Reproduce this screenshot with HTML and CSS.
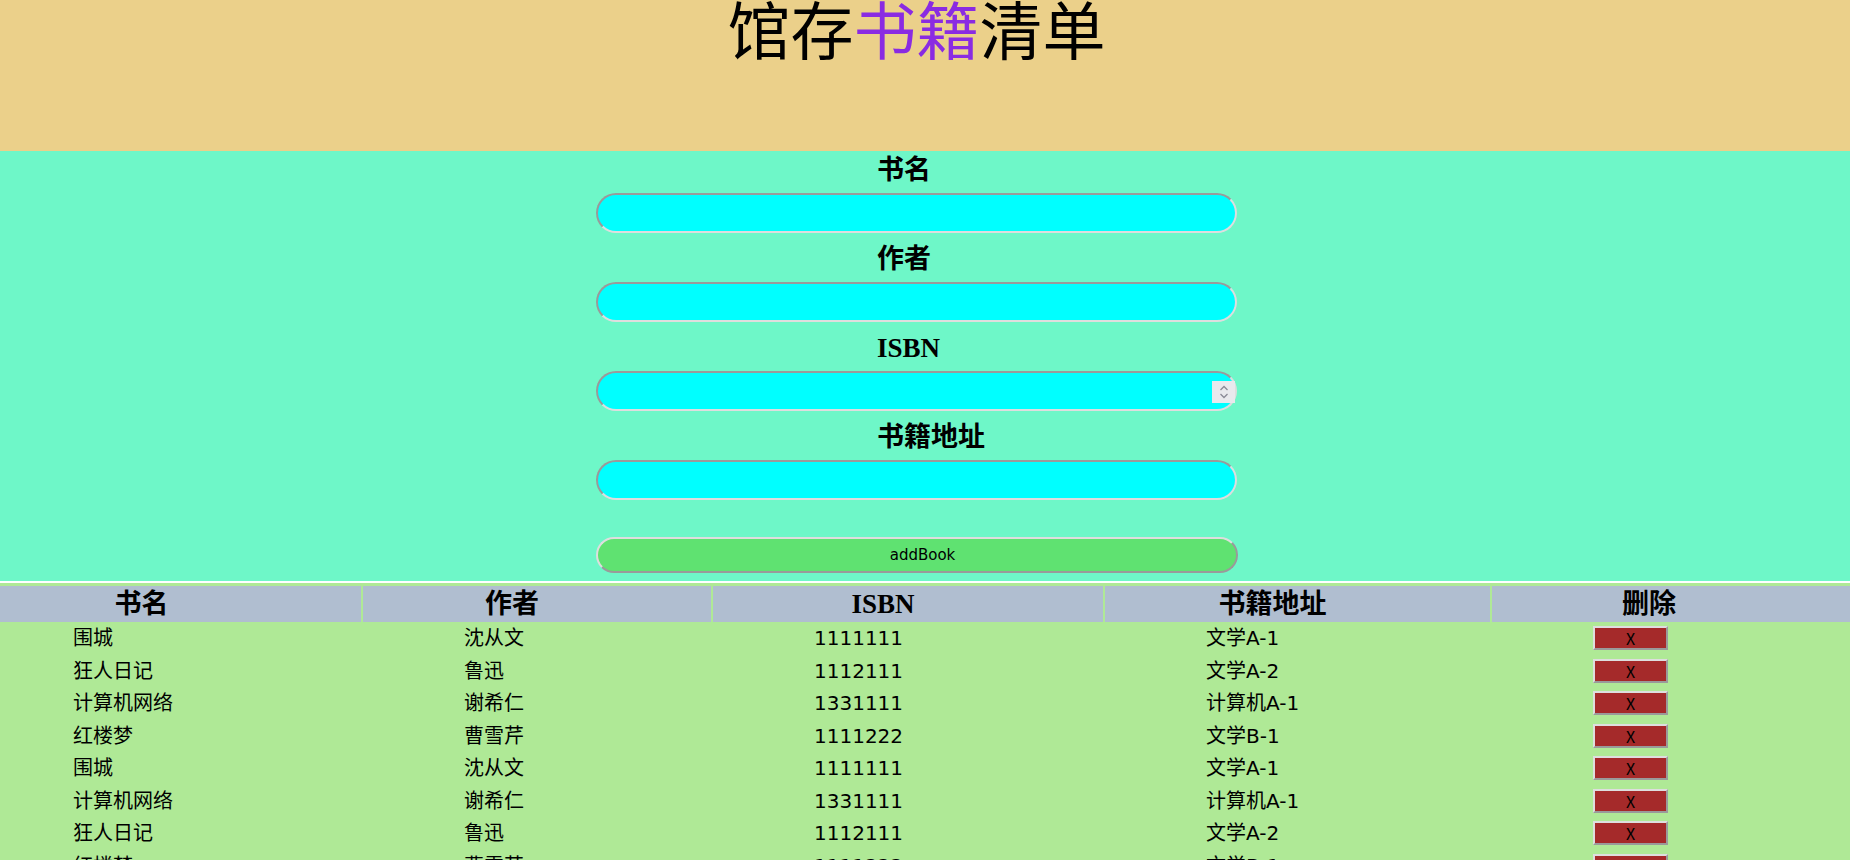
FILE: index.html
```html
<!DOCTYPE html>
<html lang="zh-CN">
<head>
<meta charset="utf-8">
<title>馆存书籍清单</title>
<link rel="stylesheet" href="styles.css">
</head>
<body>
<header class="top">
  <h1 class="title">馆存<span class="accent">书籍</span>清单</h1>
</header>
<form class="book-form">
  <div class="field"><label class="label">书名</label><input class="text-input" type="text"></div>
  <div class="field"><label class="label">作者</label><input class="text-input" type="text"></div>
  <div class="field"><label class="label">ISBN</label>
    <div class="num-wrap">
      <input class="text-input num" type="number">
      <span class="spin"><svg width="12" height="18" viewBox="0 0 12 18"><path d="M2.5 7 L6 3.5 L9.5 7" fill="none" stroke="#8a8a96" stroke-width="1.3"/><path d="M2.5 11 L6 14.5 L9.5 11" fill="none" stroke="#8a8a96" stroke-width="1.3"/></svg></span>
    </div>
  </div>
  <div class="field"><label class="label">书籍地址</label><input class="text-input" type="text"></div>
  <button class="add-btn" type="button">addBook</button>
</form>
<section class="book-table">
  <div class="row head">
    <div class="cell">书名</div><div class="cell">作者</div><div class="cell">ISBN</div><div class="cell">书籍地址</div><div class="cell">删除</div>
  </div>
  <div class="row item"><div class="cell">围城</div><div class="cell">沈从文</div><div class="cell">1111111</div><div class="cell">文学A-1</div><div class="cell"><button class="del-btn" type="button">X</button></div></div>
  <div class="row item"><div class="cell">狂人日记</div><div class="cell">鲁迅</div><div class="cell">1112111</div><div class="cell">文学A-2</div><div class="cell"><button class="del-btn" type="button">X</button></div></div>
  <div class="row item"><div class="cell">计算机网络</div><div class="cell">谢希仁</div><div class="cell">1331111</div><div class="cell">计算机A-1</div><div class="cell"><button class="del-btn" type="button">X</button></div></div>
  <div class="row item"><div class="cell">红楼梦</div><div class="cell">曹雪芹</div><div class="cell">1111222</div><div class="cell">文学B-1</div><div class="cell"><button class="del-btn" type="button">X</button></div></div>
  <div class="row item"><div class="cell">围城</div><div class="cell">沈从文</div><div class="cell">1111111</div><div class="cell">文学A-1</div><div class="cell"><button class="del-btn" type="button">X</button></div></div>
  <div class="row item"><div class="cell">计算机网络</div><div class="cell">谢希仁</div><div class="cell">1331111</div><div class="cell">计算机A-1</div><div class="cell"><button class="del-btn" type="button">X</button></div></div>
  <div class="row item"><div class="cell">狂人日记</div><div class="cell">鲁迅</div><div class="cell">1112111</div><div class="cell">文学A-2</div><div class="cell"><button class="del-btn" type="button">X</button></div></div>
  <div class="row item"><div class="cell">红楼梦</div><div class="cell">曹雪芹</div><div class="cell">1111222</div><div class="cell">文学B-1</div><div class="cell"><button class="del-btn" type="button">X</button></div></div>
</section>
</body>
</html>
```
FILE: styles.css
```css
html {
  overflow: hidden;
}
body {
  margin: 0;
  font-family: "Noto Sans CJK SC", "Liberation Sans", sans-serif;
  color: #000;
}
.top {
  height: 151px;
  background: #ebd08a;
  text-align: center;
  padding-right: 17px;
  overflow: hidden;
}
.title {
  margin: -5px 0 0;
  font-family: "Noto Sans CJK SC", sans-serif;
  font-size: 63px;
  line-height: 63px;
  font-weight: 400;
}
.accent {
  color: #8a2be2;
}
.book-form {
  margin: 0;
  background: #6ef7c8;
  display: flex;
  flex-direction: column;
  align-items: center;
  gap: 7px;
  padding: 0 17px 8px 0;
  border-bottom: 2px solid #fff;
}
.field {
  display: flex;
  flex-direction: column;
  align-items: flex-start;
  gap: 4px;
  width: 641px;
}
.label {
  margin-left: 281px;
  font-family: "Liberation Serif", "Noto Sans CJK SC", serif;
  font-weight: 700;
  font-size: 27px;
  line-height: 38px;
}
.text-input {
  box-sizing: border-box;
  display: block;
  width: 641px;
  height: 40px;
  margin: 0;
  padding: 8px 30px 8px 18px;
  background: #00ffff;
  border: 2px solid;
  border-color: #9a9a9a #dedede #dedede #9a9a9a;
  border-radius: 20px;
  font-size: 16px;
  outline: none;
}
.num {
  -moz-appearance: textfield;
}
.num::-webkit-inner-spin-button,
.num::-webkit-outer-spin-button {
  -webkit-appearance: none;
  margin: 0;
}
.num-wrap {
  position: relative;
}
.spin {
  position: absolute;
  right: 2px;
  top: 10px;
  width: 23px;
  height: 22px;
  background: #e9e9ed;
  display: flex;
  align-items: center;
  justify-content: center;
}
.add-btn {
  box-sizing: border-box;
  margin-top: 30px;
  width: 642px;
  height: 36px;
  padding: 0 0 0 12px;
  background: #5fe271;
  border: 2px solid;
  border-color: #dedede #9a9a9a #9a9a9a #dedede;
  border-radius: 18px;
  font-family: "DejaVu Sans", sans-serif;
  font-size: 15px;
  color: #000;
}
.book-table {
  background: #afe996;
  margin-left: -28px;
  width: 1884px;
  padding-top: 3px;
}
.row {
  display: grid;
  grid-template-columns: 389px 348px 390px 385px 1fr;
  column-gap: 2px;
}
.head .cell {
  background: #b0bed0;
  height: 36px;
  line-height: 36px;
  text-align: center;
  padding-right: 50px;
  font-family: "Liberation Serif", "Noto Sans CJK SC", serif;
  font-weight: 700;
  font-size: 27px;
}
.item {
  height: 32.5px;
  align-items: center;
}
.item .cell {
  padding-left: 101px;
  font-family: "DejaVu Sans", "Noto Sans CJK SC", sans-serif;
  font-size: 20px;
  line-height: 24px;
}
.del-btn {
  box-sizing: border-box;
  width: 75px;
  height: 24px;
  margin: 0;
  padding: 0;
  background: #a52a2a;
  border: 2px solid;
  border-color: #dedede #9a9a9a #9a9a9a #dedede;
  font-family: "Noto Sans CJK SC", sans-serif;
  font-size: 16px;
  line-height: 18px;
  color: #000;
  display: block;
}
```
